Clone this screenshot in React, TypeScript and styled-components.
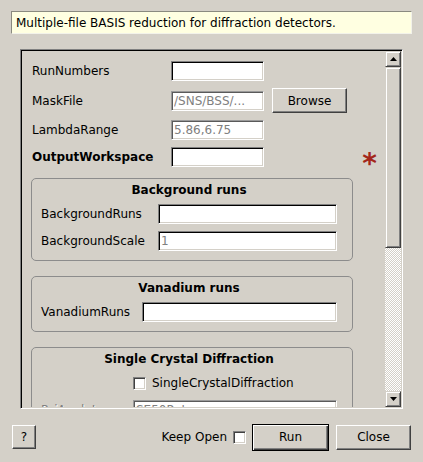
import styled, { createGlobalStyle } from 'styled-components';

const GlobalStyle = createGlobalStyle`
  html, body {
    margin: 0;
    padding: 0;
    background: #d4d0c8;
  }
  body {
    font-family: 'DejaVu Sans', 'Liberation Sans', sans-serif;
    font-size: 12px;
    color: #000;
  }
`;

type Field = { label: string; value?: string };

const backgroundFields: Field[] = [
  { label: 'BackgroundRuns' },
  { label: 'BackgroundScale', value: '1' },
];

const crystalFields: Field[] = [
  { label: 'PsiAngleLog', value: 'SE50Rot' },
  { label: 'PsiOffset', value: '-27.0' },
  { label: 'LatticeSizes' },
];

function Scrollbar() {
  return (
    <ScrollTrack>
      <ArrowButton>
        <svg width='7' height='4' viewBox='0 0 7 4'>
          <polygon points='3.5,0 7,4 0,4' fill='#000' />
        </svg>
      </ArrowButton>
      <Thumb />
      <Groove />
      <ArrowButton>
        <svg width='7' height='4' viewBox='0 0 7 4'>
          <polygon points='0,0 7,0 3.5,4' fill='#000' />
        </svg>
      </ArrowButton>
    </ScrollTrack>
  );
}

export default function App() {
  return (
    <>
      <GlobalStyle />
      <Dialog>
        <Description>
          Multiple-file BASIS reduction for diffraction detectors.
        </Description>

        <ScrollFrame>
          <Viewport>
            <Content>
              <MainForm>
                <Label>RunNumbers</Label>
                <LineEdit />

                <Label>MaskFile</Label>
                <LineEdit readOnly value='/SNS/BSS/...' $muted />
                <PushButton>Browse</PushButton>

                <Label>LambdaRange</Label>
                <LineEdit readOnly value='5.86,6.75' $muted />

                <Label $bold>OutputWorkspace</Label>
                <LineEdit />
                <Star>*</Star>
              </MainForm>

              <GroupBox $first>
                <GroupTitle>Background runs</GroupTitle>
                {backgroundFields.map((f) => (
                  <GroupRow key={f.label} $labelWidth={111}>
                    <Label>{f.label}</Label>
                    <LineEdit readOnly value={f.value ?? ''} />
                  </GroupRow>
                ))}
              </GroupBox>

              <GroupBox>
                <GroupTitle>Vanadium runs</GroupTitle>
                <GroupRow $labelWidth={95}>
                  <Label>VanadiumRuns</Label>
                  <LineEdit />
                </GroupRow>
              </GroupBox>

              <GroupBox>
                <GroupTitle>Single Crystal Diffraction</GroupTitle>
                <GroupRow $labelWidth={86}>
                  <span />
                  <CheckRow>
                    <CheckBox />
                    <span>SingleCrystalDiffraction</span>
                  </CheckRow>
                </GroupRow>
                {crystalFields.map((f) => (
                  <GroupRow key={f.label} $labelWidth={86}>
                    <Label $disabled>{f.label}</Label>
                    <LineEdit readOnly value={f.value ?? ''} $muted />
                  </GroupRow>
                ))}
              </GroupBox>
            </Content>
          </Viewport>
          <Scrollbar />
        </ScrollFrame>

        <Footer>
          <PushButton $square>?</PushButton>
          <KeepOpen>Keep Open</KeepOpen>
          <CheckBox />
          <PushButton $default>Run</PushButton>
          <PushButton>Close</PushButton>
        </Footer>
      </Dialog>
    </>
  );
}

const Dialog = styled.div`
  width: 423px;
  height: 462px;
  box-sizing: border-box;
  padding-top: 11px;

  display: flex;
  flex-direction: column;
`;

const Description = styled.div`
  margin: 0 11px;
  height: 23px;
  box-sizing: border-box;
  padding-left: 4px;

  display: flex;
  align-items: center;

  background: #ffffe1;
  border: 1px solid;
  border-color: #8a8a80 #f2f2ea #f2f2ea #8a8a80;
`;

const ScrollFrame = styled.div`
  margin: 15px 20px 0;
  height: 360px;
  box-sizing: border-box;
  padding: 1px;

  display: flex;

  border: 1px solid;
  border-color: #808080 #fff #fff #808080;
  box-shadow: inset 1px 1px 0 #000, inset -1px -1px 0 #d4d0c8;
`;

const Viewport = styled.div`
  flex: 1;
  overflow: hidden;
`;

const Content = styled.div`
  padding: 10px 0 0 9px;

  display: flex;
  flex-direction: column;
`;

const MainForm = styled.div`
  padding: 0 8px 0 1px;

  display: grid;
  grid-template-columns: 131px 93px auto 1fr;
  column-gap: 8px;
  row-gap: 7px;
  align-items: center;

  & > label {
    grid-column: 1;
  }
`;

const Label = styled.label<{ $bold?: boolean; $disabled?: boolean }>`
  white-space: nowrap;
  font-weight: ${(p) => (p.$bold ? 700 : 400)};
  color: ${(p) => (p.$disabled ? '#808080' : '#000')};
  text-shadow: ${(p) => (p.$disabled ? '1px 1px 0 #fff' : 'none')};
`;

const LineEdit = styled.input<{ $muted?: boolean }>`
  width: 100%;
  height: 20px;
  box-sizing: border-box;
  margin: 0;
  padding: 0 2px;

  font: inherit;
  color: #808080;
  background: #fff;
  outline: none;

  border: 1px solid;
  border-color: ${(p) =>
    p.$muted ? '#9a9a9a #fff #fff #9a9a9a' : '#808080 #fff #fff #808080'};
  box-shadow: ${(p) =>
    p.$muted
      ? 'inset 1px 1px 0 #5a5a5a, inset -1px -1px 0 #d4d0c8'
      : 'inset 1px 1px 0 #000, inset -1px -1px 0 #d4d0c8'};
`;

const PushButton = styled.button<{ $default?: boolean; $square?: boolean }>`
  width: ${(p) => (p.$square ? '24px' : p.$default ? '77px' : '75px')};
  height: ${(p) => (p.$default ? '27px' : p.$square ? '24px' : '25px')};
  box-sizing: border-box;
  margin: 0;
  padding: 0;
  flex-shrink: 0;

  font: inherit;
  color: #000;
  background: #d4d0c8;

  border: 1px solid;
  border-color: ${(p) =>
    p.$default ? '#000' : '#fff #404040 #404040 #fff'};
  box-shadow: ${(p) =>
    p.$default
      ? 'inset 1px 1px 0 #fff, inset -1px -1px 0 #404040, inset -2px -2px 0 #808080'
      : 'inset -1px -1px 0 #808080'};
`;

const Star = styled.span`
  grid-column: 4;
  justify-self: end;
  height: 20px;
  overflow: visible;

  font-size: 28px;
  font-weight: 700;
  line-height: 34px;
  color: #a3261a;
`;

const GroupBox = styled.div<{ $first?: boolean }>`
  width: 322px;
  box-sizing: border-box;
  margin-top: ${(p) => (p.$first ? '11px' : '15px')};
  padding: 4px 15px 9px 9px;

  display: flex;
  flex-direction: column;
  gap: 7px;

  border: 1px solid #8c8c8c;
  border-radius: 5px;
`;

const GroupTitle = styled.div`
  line-height: 15px;
  margin-bottom: -1px;
  font-weight: 700;
  text-align: center;
`;

const GroupRow = styled.div<{ $labelWidth: number }>`
  display: grid;
  grid-template-columns: ${(p) => p.$labelWidth}px 1fr;
  column-gap: 6px;
  align-items: center;
  min-height: 20px;
`;

const CheckRow = styled.div`
  display: flex;
  align-items: center;
  gap: 6px;
`;

const CheckBox = styled.span`
  width: 13px;
  height: 13px;
  box-sizing: border-box;
  flex-shrink: 0;

  background: #fff;
  border: 1px solid;
  border-color: #808080 #fff #fff #808080;
  box-shadow: inset 1px 1px 0 #404040, inset -1px -1px 0 #d4d0c8;
`;

const ScrollTrack = styled.div`
  width: 16px;
  display: flex;
  flex-direction: column;
`;

const raised = `
  box-sizing: border-box;
  background: #d4d0c8;
  border: 1px solid;
  border-color: #d4d0c8 #404040 #404040 #d4d0c8;
  box-shadow: inset 1px 1px 0 #fff, inset -1px -1px 0 #808080;
`;

const ArrowButton = styled.div`
  ${raised}
  height: 16px;
  display: flex;
  align-items: center;
  justify-content: center;
`;

const Thumb = styled.div`
  ${raised}
  height: 181px;
`;

const Groove = styled.div`
  flex: 1;
  background: repeating-conic-gradient(#fff 0 25%, #d4d0c8 0 50%) 0 0 / 2px 2px;
`;

const Footer = styled.div`
  flex: 1;
  padding: 3px 12px 0;

  display: flex;
  align-items: center;

  & > span + button {
    margin-left: 6px;
  }
  & > button + button {
    margin-left: 7px;
  }
`;

const KeepOpen = styled.span`
  margin-left: auto;
  margin-right: 6px;
`;
